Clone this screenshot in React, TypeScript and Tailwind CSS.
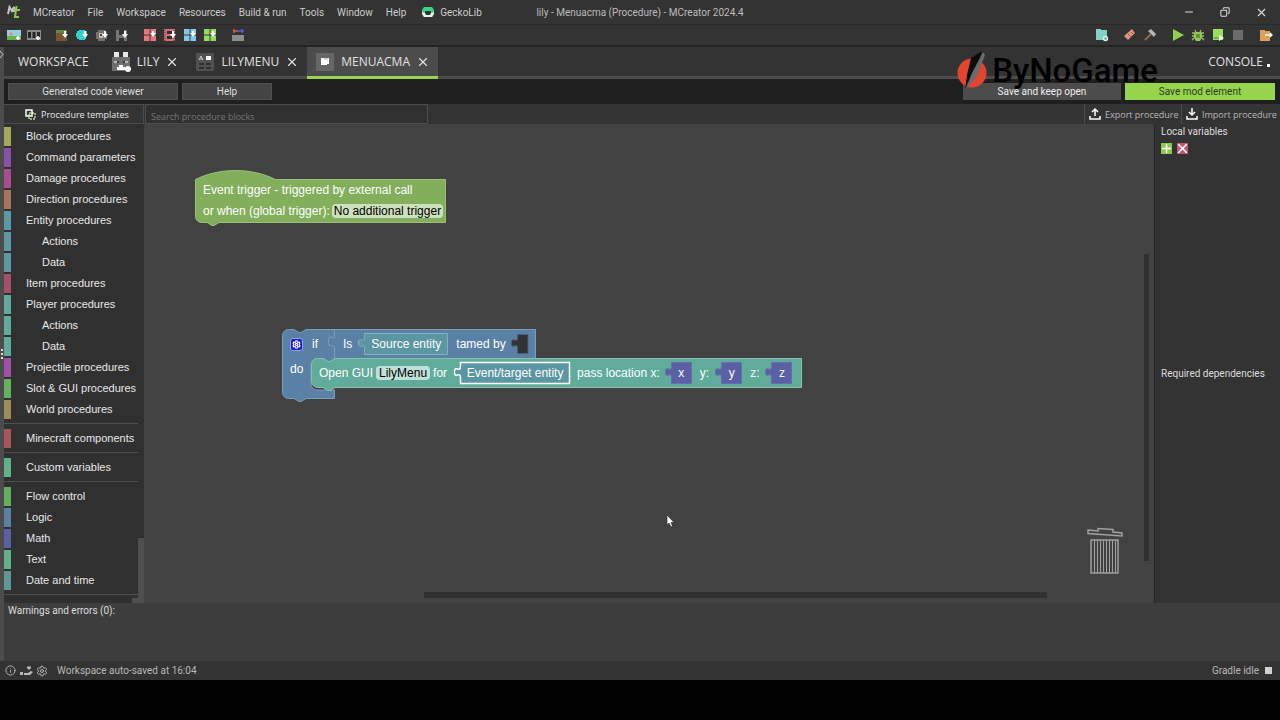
import { ReactNode } from 'react';
import clsx from 'clsx';
import { Copy, Info, Minus, Settings, X } from 'lucide-react';

const MENUS = ['MCreator', 'File', 'Workspace', 'Resources', 'Build & run', 'Tools', 'Window', 'Help'];

type Category = { name: string; color: string; nested?: boolean };

const CATEGORIES: Category[][] = [
  [
    { name: 'Block procedures', color: 'bg-[#a3a85a]' },
    { name: 'Command parameters', color: 'bg-[#8a4fa8]' },
    { name: 'Damage procedures', color: 'bg-[#a64f90]' },
    { name: 'Direction procedures', color: 'bg-[#a6735b]' },
    { name: 'Entity procedures', color: 'bg-[#5b99a6]' },
    { name: 'Actions', color: 'bg-[#5b99a6]', nested: true },
    { name: 'Data', color: 'bg-[#5b99a6]', nested: true },
    { name: 'Item procedures', color: 'bg-[#a3506c]' },
    { name: 'Player procedures', color: 'bg-[#60ab9b]' },
    { name: 'Actions', color: 'bg-[#60ab9b]', nested: true },
    { name: 'Data', color: 'bg-[#60ab9b]', nested: true },
    { name: 'Projectile procedures', color: 'bg-[#a44fa6]' },
    { name: 'Slot & GUI procedures', color: 'bg-[#65b05c]' },
    { name: 'World procedures', color: 'bg-[#a08a5c]' },
  ],
  [{ name: 'Minecraft components', color: 'bg-[#a6555f]' }],
  [{ name: 'Custom variables', color: 'bg-[#60b089]' }],
  [
    { name: 'Flow control', color: 'bg-[#62b05c]' },
    { name: 'Logic', color: 'bg-[#5b80a5]' },
    { name: 'Math', color: 'bg-[#5b60a5]' },
    { name: 'Text', color: 'bg-[#60b089]' },
    { name: 'Date and time', color: 'bg-[#5f9696]' },
  ],
];

// small white "import" arrow drawn over the texture icons
const Arrow = () => <path d="M8 2h2v3h2L9 9 6 5h2z" fill="#fff" />;

const Quad = ({ color }: { color: string }) => (
  <>
    <rect width="12" height="12" fill={color} />
    <path d="M6 0v12M0 6h12" stroke="#3a3a3a" />
    <path d="M8 2h2v2h2L9 8 6 4h2z" fill="#fff" />
  </>
);

const LEFT_TOOLS: [string, ReactNode][][] = [
  [
    [
      'Import texture',
      <>
        <rect x="-1" y="1" width="14" height="10" fill="#8fd3e0" />
        <rect x="-1" y="7" width="14" height="4" fill="#6cb04a" />
        <path d="M3 3v4M1 5h4" stroke="#d98aa0" strokeWidth="1.5" />
        <path d="M10 7v4M8 9h4" stroke="#fff" strokeWidth="1.4" />
      </>,
    ],
    [
      'Import animation',
      <>
        <rect x="-1" y="1" width="14" height="10" fill="#8a8a8a" />
        <path d="M0 3h3v6H0zM4.5 3h3v6h-3zM9 3h3v6H9z" fill="#262626" />
        <path d="M10 7v4M8 9h4" stroke="#fff" strokeWidth="1.4" />
      </>,
    ],
  ],
  [
    [
      'Block texture',
      <>
        <rect y="1" width="11" height="11" fill="#7b5434" />
        <rect y="1" width="11" height="3" fill="#5f8a3c" />
        <Arrow />
      </>,
    ],
    [
      'Item texture',
      <>
        <path d="M3 1h6v1h2v6h-1v2H9v1H3v-1H1V8H0V4h1V2h2z" fill="#35cfd0" />
        <Arrow />
      </>,
    ],
    [
      'Entity texture',
      <>
        <path d="M2 1h7v2h2v7H9v2H2v-2H0V3h2z" fill="#77716c" />
        <rect x="3" y="4" width="4" height="5" fill="#c2beb8" />
        <rect x="4" y="5" width="2" height="2" fill="#444" />
        <Arrow />
      </>,
    ],
    [
      'Armor texture',
      <>
        <path d="M0 1h3v5h5V1h3v11H8V9H3v3H0z" fill="#777" />
        <Arrow />
      </>,
    ],
  ],
  [
    ['Import structure', <Quad color="#e8767c" />],
    [
      'Import model',
      <>
        <rect width="11" height="12" fill="#d3707b" />
        <path d="M3 2h5v3H3zM3 7h5v3H3z" fill="#352a2c" />
        <path d="M1 1v11M10 1v11" stroke="#5a2f35" strokeDasharray="1 1" />
        <Arrow />
      </>,
    ],
    ['Import java model', <Quad color="#85c8ee" />],
    ['Import json model', <Quad color="#95da62" />],
  ],
  [
    [
      'Edit workspace',
      <>
        <rect y="6" width="12" height="6" fill="#8d8d8d" />
        <path d="M1 2h5M2 0v4" stroke="#d0604e" strokeWidth="1.5" />
        <path d="M6 2h6M10 0v4" stroke="#4a62d8" strokeWidth="1.5" />
      </>,
    ],
  ],
];

const RIGHT_TOOLS: [string, ReactNode][][] = [
  [
    [
      'Workspace settings',
      <>
        <path d="M0 0h5v1h6v10H0z" fill="#82d2c4" />
        <circle cx="9.5" cy="9.5" r="2" fill="#5fa79c" stroke="#dff5f0" strokeWidth="1.3" />
      </>,
    ],
  ],
  [
    [
      'Clean',
      <>
        <path d="M8 0l3 4-7 7-4-4z" fill="#e0957c" />
        <path d="M4 5l3 3M7 3l2 2" stroke="#8c5948" />
      </>,
    ],
    [
      'Build',
      <>
        <path d="M1 11l6-6" stroke="#8a6a50" strokeWidth="2" />
        <path d="M4 2l3-2 5 5-2 3-2-2-1-1z" fill="#b5b5b5" />
      </>,
    ],
  ],
  [
    ['Run client', <path d="M1 0l11 6-11 6z" fill="#8fd04f" />],
    [
      'Debug client',
      <>
        <path d="M3 1l1 2M9 1L8 3M0 4h12M0 7h12M0 11l2-2M12 11l-2-2" stroke="#93c858" strokeWidth="1.3" />
        <path d="M3 3h6l1 2v4l-2 3H4L2 9V5z" fill="#93c858" />
        <path d="M4 6h4M4 8h4" stroke="#3a5a20" />
      </>,
    ],
    [
      'Run server',
      <>
        <rect x="1" width="10" height="11" fill="#9ade5e" />
        <path d="M2 9h5" stroke="#4f8a2a" />
        <path d="M7 6l5 3-5 3z" fill="#f0fae8" />
      </>,
    ],
    ['Stop', <rect x="1" y="1" width="10" height="10" fill="#6b6b6b" />],
  ],
  [
    [
      'Export mod',
      <>
        <path d="M0 1h5v1h5v10H0z" fill="#dba05c" />
        <path d="M5 6h7M10 4l2 2-2 2" stroke="#fff" strokeWidth="1.3" fill="none" />
      </>,
    ],
  ],
];

const ToolGroups = ({ groups }: { groups: [string, ReactNode][][] }) => (
  <div className="flex gap-2">
    {groups.map((group, i) => (
      <div key={i} className="flex">
        {group.map(([label, icon]) => (
          <button key={label} aria-label={label} className="flex h-5 w-5 items-center justify-center">
            <svg className="h-3 w-3 overflow-visible" viewBox="0 0 12 12">
              {icon}
            </svg>
          </button>
        ))}
      </div>
    ))}
  </div>
);

const TitleBar = () => (
  <header className="grid h-[25px] grid-cols-[1fr_auto_1fr] items-center border-b border-[#292929] bg-[#333]">
    <div className="flex items-center">
      <svg className="ml-2 h-3 w-3 overflow-visible" viewBox="0 0 12 12" fill="none">
        <path d="M0 8L1.500 1L4 5L6 1V6" stroke="#c8c8c8" strokeWidth="2" />
        <path d="M8.500 0L7 11H11M5.500 4H12" stroke="#8fc94c" strokeWidth="2" />
      </svg>
      <nav className="ml-[13px] flex items-center gap-[13px]">
        {MENUS.map((m) => (
          <button key={m} className="whitespace-nowrap">
            {m}
          </button>
        ))}
        <button className="ml-[3px] flex items-center gap-[6px]">
          <svg className="h-3 w-3" viewBox="0 0 12 12">
            <path d="M2 1h8l2 3v4l-2 3H2L0 8V4z" fill="#3ecf8b" />
            <path d="M0 6l3 1h6l3-1v2l-2 3H2L0 8z" fill="#e9f5ee" />
            <path d="M3 5h6v2L8 9H4L3 7z" fill="#1d3a2c" />
          </svg>
          GeckoLib
        </button>
      </nav>
    </div>
    <h1 className="whitespace-nowrap text-[#bdbdbd]">lily - Menuacma (Procedure) - MCreator 2024.4</h1>
    <div className="flex items-center justify-end pr-[1px] text-[#ddd]">
      <button aria-label="Minimize" className="flex w-9 justify-center">
        <Minus size={12} strokeWidth={2} />
      </button>
      <button aria-label="Restore" className="flex w-9 justify-center">
        <Copy size={10} strokeWidth={2.5} className="-scale-x-100" />
      </button>
      <button aria-label="Close" className="flex w-9 justify-center">
        <X size={13} strokeWidth={2} />
      </button>
    </div>
  </header>
);

const Tab = ({ name, icon, active }: { name: string; icon: ReactNode; active?: boolean }) => (
  <div
    className={clsx(
      'flex items-center border-b-[3px] pl-[9px] pr-2',
      active ? 'border-[#9ad254] bg-[#4c4c4c]' : 'border-[#4c4c4c]',
    )}
  >
    <svg className="h-[18px] w-[18px] overflow-visible" viewBox="0 0 18 18">
      {icon}
    </svg>
    <button className="ml-[7px]">{name}</button>
    <button aria-label={`Close ${name}`} className="ml-[6px]">
      <X size={14} strokeWidth={2} />
    </button>
  </div>
);

const Tabs = () => (
  <div className="flex h-8 bg-[#333] font-['Open_Sans','Noto_Sans',sans-serif] text-[12px] text-[#e0e0e0]">
    <button className="border-b-[3px] border-[#4c4c4c] px-[14px]">WORKSPACE</button>
    <Tab
      name="LILY"
      icon={
        <>
          <path d="M2-1h5v5H2zM11-1h5v5h-5z" fill="#e8e8e8" />
          <rect y="4" width="18" height="14" fill="#6e6e6e" />
          <path d="M2 8h5v2H2zM11 8h5v2h-5z" fill="#bbb" />
          <path d="M5 8h2v2H5zM11 8h2v2h-2z" fill="#333" />
          <path d="M7 12h4v2h2v3H5v-3h2z" fill="#fff" />
          <circle cx="16" cy="16" r="3" fill="#fff" />
        </>
      }
    />
    <Tab
      name="LILYMENU"
      icon={
        <>
          <rect width="18" height="18" fill="#515151" />
          <path d="M3 7l2-4 2 4M4 6h3" stroke="#ccc" fill="none" />
          <rect x="10" y="3" width="5" height="4" fill="#fff" />
          <path d="M3 10h5v2H3zM10 10h5v2h-5zM3 14h5v2H3zM10 14h5v2h-5z" fill="#303030" />
        </>
      }
    />
    <Tab
      name="MENUACMA"
      active
      icon={
        <>
          <rect width="18" height="18" fill="#666" />
          <path d="M5 5h8v6h-2v1H5z" fill="#fff" />
          <path d="M8 6h4" stroke="#aaa" />
        </>
      }
    />
    <div className="flex flex-1 items-center justify-end gap-[4px] border-b-[3px] border-[#4c4c4c] pr-[10px]">
      <button>CONSOLE</button>
      <span className="mt-[7px] h-[3px] w-[3px] bg-white" />
    </div>
  </div>
);

const Watermark = () => (
  <div className="pointer-events-none absolute right-[122px] top-[49px] flex items-center gap-[5px]">
    <svg className="h-10 w-[30px]" viewBox="0 0 30 40">
      <circle cx="15" cy="22" r="14.5" fill="#e2452f" />
      <path d="M14 7L25 0L20 18L8 39L10 24z" fill="#0c0c0c" />
      <path d="M26 1L28 4L20 25L8 39L15 22z" fill="#6b6b6b" />
    </svg>
    <span className="font-['Roboto',sans-serif] text-[33px] font-medium leading-[44px] text-black">ByNoGame</span>
  </div>
);

const ActionBar = () => (
  <div className="flex h-[25px] items-center gap-1 bg-[#1f1f1f] pl-1 pr-[5px] text-[#ddd]">
    <button className="h-[17px] w-[170px] border border-[#4f4f4f] bg-[#444]">Generated code viewer</button>
    <button className="h-[17px] w-[90px] border border-[#4f4f4f] bg-[#444]">Help</button>
    <button className="ml-auto h-[17px] w-[158px] bg-[#4c4c4c] text-[#eee]">Save and keep open</button>
    <button className="h-[17px] w-[150px] bg-[#96d44e] text-[#2b3a1a]">Save mod element</button>
  </div>
);

const TrayIcon = ({ d }: { d: string }) => (
  <svg className="h-3 w-3 shrink-0" viewBox="0 0 12 12" fill="none" stroke="#fff" strokeWidth="1.5">
    <path d={d} />
    <path d="M1 8v3h10V8" />
  </svg>
);

const TemplateBar = () => (
  <div className="flex h-5 bg-[#333] font-['Open_Sans','Noto_Sans',sans-serif] text-[9px]">
    <button className="flex w-[140px] items-center gap-[5px] border-y border-r border-[#4a4a4a] pl-[21px] text-[#e6e6e6]">
      <svg className="h-[11px] w-[11px]" viewBox="0 0 11 11" fill="none">
        <path d="M4 4h6v6H4z" stroke="#b9d78a" strokeWidth="1.5" strokeDasharray="2 1" />
        <rect x="1" y="1" width="6" height="6" stroke="#fff" strokeWidth="1.5" />
      </svg>
      <span className="pt-[1px]">Procedure templates</span>
    </button>
    <input
      aria-label="Search procedure blocks"
      placeholder="Search procedure blocks"
      className="ml-[1px] w-[283px] border border-[#4c4c4c] bg-[#303030] px-[5px] pt-[5px] text-white outline-none placeholder:text-[#757575]"
    />
    <div className="ml-auto flex text-[#b8b8b8]">
      <button className="flex w-[97px] items-center gap-1 border-l border-[#4c4c4c] pl-1">
        <TrayIcon d="M6 8V1M3 4l3-3 3 3" />
        <span className="whitespace-nowrap pt-[1px]">Export procedure</span>
      </button>
      <button className="flex w-[99px] items-center gap-1 border-l border-[#4c4c4c] pl-1">
        <TrayIcon d="M6 0v7M3 4l3 3 3-3" />
        <span className="whitespace-nowrap pt-[1px]">Import procedure</span>
      </button>
    </div>
  </div>
);

const Toolbox = () => (
  <aside className="relative w-[140px] shrink-0 overflow-hidden bg-[#303030] pt-[2px] font-['Liberation_Sans',Arial,sans-serif] text-[11px] text-[#e8e8e8]">
    {CATEGORIES.map((group, i) => (
      <div key={i}>
        {group.map((c, j) => (
          <button key={j} className="flex h-[21px] w-full items-center">
            <span className={clsx('h-[19px] w-[7px]', c.color)} />
            <span className={c.nested ? 'ml-[31px]' : 'ml-[15px]'}>{c.name}</span>
          </button>
        ))}
        <div className="mb-1 mr-[6px] mt-[3px] h-px bg-[#505050]" />
      </div>
    ))}
    <div className="absolute bottom-0 right-0 h-[65px] w-[6px] bg-[#4f4f4f]" />
    <div className="absolute bottom-0 right-[6px] h-[5px] w-[6px] bg-[#4f4f4f]" />
  </aside>
);

type ValueBlockProps = { width: number; fill: string; stroke: string; selected?: boolean; children: ReactNode };

// rectangular block with the puzzle tab on its left side
const ValueBlock = ({ width, fill, stroke, selected, children }: ValueBlockProps) => (
  <span className="relative flex h-[22px] shrink-0 items-center justify-center" style={{ width }}>
    <svg className="absolute inset-0 h-full w-full overflow-visible">
      <path
        d={`M0.500 0.500H${width - 0.5}V21.500H0.500V16c0-8-6 2-6-6s6 2 6-6z`}
        fill={fill}
        stroke={stroke}
        strokeWidth={selected ? 1.5 : 1}
      />
    </svg>
    <span className="relative">{children}</span>
  </span>
);

const EventBlock = () => (
  <div className="absolute left-[51px] top-[46px] h-[57px] w-[252px] text-white">
    <svg className="absolute inset-0 h-full w-full overflow-visible">
      <path
        d="M0.500 9.500c24-12 56-12 80 0H250.500V52.500H24l-5 3h-2l-5-3H6.500a6 6 0 0 1-6-6z"
        fill="#83ae5c"
        stroke="#9cc07c"
      />
    </svg>
    <div className="relative flex flex-col gap-[5px] pl-2 pt-[12px] leading-4">
      <span>Event trigger - triggered by external call</span>
      <div className="flex items-center gap-[2px]">
        <span>or when (global trigger):</span>
        <button className="h-[14px] rounded bg-[#cde0bd] px-[2px] leading-[14px] text-black">
          No additional trigger
        </button>
      </div>
    </div>
  </div>
);

const IfBlock = () => (
  <div className="absolute left-[138px] top-[205px] text-white">
    <svg className="absolute h-[74px] w-[400px] overflow-visible">
      <path
        d="M0.500 6.500a6 6 0 0 1 6-6H12l5 3h2l5-3H253.500V29.500H53l-5 3h-2l-5-3H35a6 6 0 0 0-6 6V55a6 6 0 0 0 6 6H52.500V69.500H24l-5 3h-2l-5-3H6.500a6 6 0 0 1-6-6z"
        fill="#5b80a5"
        stroke="#7d9dbc"
      />
      <path d="M52.500 29V20c0-8-6 2-6-8s6 2 6-6V1" fill="none" stroke="#7d9dbc" />
    </svg>
    <div className="relative flex h-[30px] items-center">
      <button
        aria-label="Block settings"
        className="ml-2 flex h-[13px] w-[13px] items-center justify-center rounded-[3px] border border-[#8f9fe0] bg-[#1f1fc8]"
      >
        <Settings size={9} strokeWidth={3} />
      </button>
      <span className="ml-[9px]">if</span>
      <span className="ml-[25px]">Is</span>
      <span className="ml-[12px]">
        <ValueBlock width={84} fill="#5b96a3" stroke="#82b3bd">
          Source entity
        </ValueBlock>
      </span>
      <span className="ml-2">tamed by</span>
      <svg className="ml-[11px] h-[20px] w-[11px] overflow-visible">
        <path d="M0.500 0.500H11V19.500H0.500V15c0-8-6 2-6-6s6 2 6-6z" fill="#333" stroke="#46627e" />
      </svg>
    </div>
    <span className="relative ml-2 block leading-5">do</span>
  </div>
);

const OpenGuiBlock = () => (
  <div className="absolute left-[167px] top-[234px] flex h-[30px] w-[491px] items-center whitespace-nowrap text-white">
    <svg className="absolute inset-0 h-full w-full overflow-visible">
      <path
        d="M0.500 6.500a6 6 0 0 1 6-6H12l5 3h2l5-3H490.500V29.500H24l-5 3h-2l-5-3H6.500a6 6 0 0 1-6-6z"
        fill="#60ab9a"
        stroke="#86c2b4"
      />
    </svg>
    <div className="relative flex items-center">
      <span className="ml-2">Open GUI</span>
      <button className="ml-[3px] h-[14px] rounded bg-[#bfe0d8] px-[3px] leading-[14px] text-black">LilyMenu</button>
      <span className="ml-[3px]">for</span>
      <span className="ml-[13px]">
        <ValueBlock width={110} fill="#5b96a3" stroke="#fff" selected>
          Event/target entity
        </ValueBlock>
      </span>
      <span className="ml-[7px]">pass location x:</span>
      <span className="ml-[11px]">
        <ValueBlock width={21} fill="#5b60a5" stroke="#686dae">
          x
        </ValueBlock>
      </span>
      <span className="ml-2">y:</span>
      <span className="ml-[12px]">
        <ValueBlock width={21} fill="#5b60a5" stroke="#686dae">
          y
        </ValueBlock>
      </span>
      <span className="ml-2">z:</span>
      <span className="ml-[12px]">
        <ValueBlock width={21} fill="#5b60a5" stroke="#686dae">
          z
        </ValueBlock>
      </span>
    </div>
  </div>
);

const Canvas = () => (
  <main className="relative flex-1 overflow-hidden bg-[#424242] font-['Liberation_Sans',Arial,sans-serif] text-[12px]">
    <EventBlock />
    <IfBlock />
    <OpenGuiBlock />
    <div className="absolute bottom-[42px] right-[5px] top-[130px] w-[5px] bg-[#303030]" />
    <div className="absolute bottom-[5px] left-[280px] right-[107px] h-[6px] bg-[#303030]" />
    <svg
      className="absolute bottom-[28px] right-[31px] h-[48px] w-[36px]"
      viewBox="0 0 36 48"
      fill="none"
      stroke="#a0a0a0"
    >
      <path d="M1 3l10 1V1.500l15 1V5l9 1v3L1 6.500z" strokeWidth="1.500" />
      <path d="M4 13h27v33H4z" strokeWidth="1.500" />
      <path d="M7.500 13v33M10.500 13v33M13.500 13v33M16.500 13v33M19.500 13v33M22.500 13v33M25.500 13v33M28.500 13v33" />
    </svg>
    <svg className="absolute left-[522px] top-[390px] h-[14px] w-[9px]" viewBox="0 0 9 14">
      <path d="M1 1v10l2-2 2 4 1.500-1L5 8.500h3z" fill="#fff" stroke="#222" strokeWidth="0.600" />
    </svg>
  </main>
);

const VariablesPanel = () => (
  <aside className="flex w-[126px] shrink-0 flex-col border-l border-[#262626] bg-[#333] pl-[6px] text-[#ddd]">
    <section className="flex-1">
      <h2 className="leading-4">Local variables</h2>
      <div className="mt-[3px] flex gap-[5px]">
        <button aria-label="Add variable" className="flex h-[11px] w-[11px] items-center justify-center bg-[#8cc84b]">
          <svg className="h-[9px] w-[9px]" viewBox="0 0 9 9" stroke="#fff" strokeWidth="1.500">
            <path d="M4.500 0v9M0 4.500h9" />
          </svg>
        </button>
        <button aria-label="Remove variable" className="flex h-[11px] w-[11px] items-center justify-center bg-[#c05a72]">
          <svg className="h-[9px] w-[9px]" viewBox="0 0 9 9" stroke="#fff" strokeWidth="1.500">
            <path d="M0 0l9 9M9 0L0 9" />
          </svg>
        </button>
      </div>
    </section>
    <section className="flex-1">
      <h2 className="whitespace-nowrap pt-[2px] leading-4">Required dependencies</h2>
    </section>
  </aside>
);

const StatusBar = () => (
  <footer className="flex h-[19px] items-center bg-[#333] pl-[5px] pr-2 text-[#b8b8b8]">
    <button aria-label="Info">
      <Info size={11} strokeWidth={2} />
    </button>
    <button aria-label="Donate" className="ml-[4px]">
      <svg className="h-3 w-[13px]" viewBox="0 0 13 12" fill="#b8b8b8">
        <rect y="7" width="3" height="3" />
        <path d="M4 8h4l3-2 2 1-3 3H4z" />
        <path d="M7 2l1-1 1 1 1-1 1 1v1L9 5 7 3z" />
      </svg>
    </button>
    <button aria-label="Preferences" className="ml-[3px]">
      <Settings size={12} strokeWidth={2} />
    </button>
    <span className="ml-[9px]">Workspace auto-saved at 16:04</span>
    <span className="ml-auto">Gradle idle</span>
    <span className="ml-[6px] h-[7px] w-[7px] bg-[#d0d0d0]" />
  </footer>
);

const App = () => {
  return (
    <div className="h-screen bg-black pb-10 font-['Roboto','Noto_Sans',sans-serif] text-[10px] text-[#ccc]">
      <div className="relative flex h-full flex-col overflow-hidden">
        <TitleBar />
        <div className="flex h-[22px] items-center justify-between border-b-2 border-[#242424] bg-[#333] px-1">
          <ToolGroups groups={LEFT_TOOLS} />
          <ToolGroups groups={RIGHT_TOOLS} />
        </div>
        <div className="flex min-h-0 flex-1">
          <div className="relative w-1 shrink-0 bg-[#4c4c4c]">
            <svg className="absolute left-0 top-[3px] h-[9px] w-[4px]" viewBox="0 0 4 9" fill="none" stroke="#ccc">
              <path d="M0 1l3 3.500L0 8" />
            </svg>
            <svg className="absolute left-0 top-[302px] h-[11px] w-[4px]" viewBox="0 0 4 11" fill="#ddd">
              <path d="M1 0h2v2H1zM1 4h2v2H1zM1 8h2v2H1z" />
            </svg>
          </div>
          <div className="flex min-w-0 flex-1 flex-col">
            <Tabs />
            <ActionBar />
            <TemplateBar />
            <div className="flex min-h-0 flex-1">
              <Toolbox />
              <Canvas />
              <VariablesPanel />
            </div>
            <section className="h-[58px] bg-[#3d3d3d] px-1 leading-4 text-[#ddd]">Warnings and errors (0):</section>
          </div>
        </div>
        <StatusBar />
        <Watermark />
      </div>
    </div>
  );
};

export default App;
